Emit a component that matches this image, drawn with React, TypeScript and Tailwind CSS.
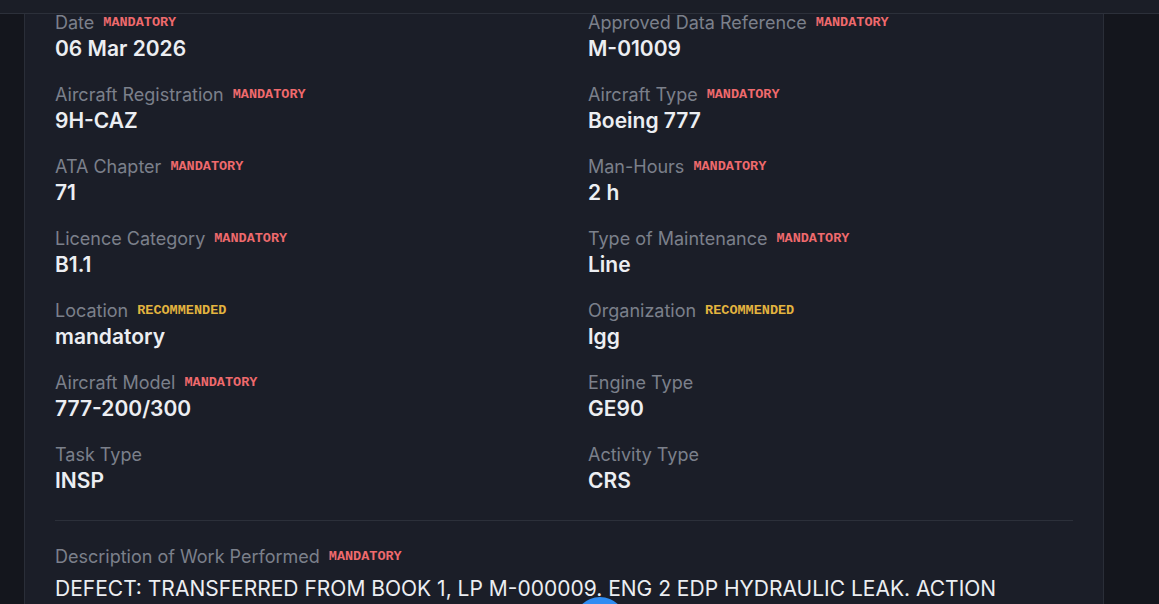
import React from "react";

type Field = { label: string; value: string; badge?: "M" | "R" };

const fields: Field[] = [
  { label: "Date", value: "06 Mar 2026", badge: "M" },
  { label: "Approved Data Reference", value: "M-01009", badge: "M" },
  { label: "Aircraft Registration", value: "9H-CAZ", badge: "M" },
  { label: "Aircraft Type", value: "Boeing 777", badge: "M" },
  { label: "ATA Chapter", value: "71", badge: "M" },
  { label: "Man-Hours", value: "2 h", badge: "M" },
  { label: "Licence Category", value: "B1.1", badge: "M" },
  { label: "Type of Maintenance", value: "Line", badge: "M" },
  { label: "Location", value: "mandatory", badge: "R" },
  { label: "Organization", value: "lgg", badge: "R" },
  { label: "Aircraft Model", value: "777-200/300", badge: "M" },
  { label: "Engine Type", value: "GE90" },
  { label: "Task Type", value: "INSP" },
  { label: "Activity Type", value: "CRS" },
];

function Badge({ kind }: { kind: "M" | "R" }) {
  return (
    <span
      className={
        "font-['Liberation_Mono',monospace] font-bold text-[13.5px] leading-none " +
        (kind === "M" ? "text-[#ef6a6d]" : "text-[#e3b43f]")
      }
    >
      {kind === "M" ? "MANDATORY" : "RECOMMENDED"}
    </span>
  );
}

function Label({ text, badge }: { text: string; badge?: "M" | "R" }) {
  return (
    <div className="flex items-center gap-[9px] h-[20px]">
      <span className="text-[18px] leading-[20px] text-[#7b808b]">{text}</span>
      {badge && <Badge kind={badge} />}
    </div>
  );
}

export default function App() {
  return (
    <div className="h-[604px] w-[1159px] overflow-hidden relative bg-[#14161d] font-['Inter',sans-serif] flex flex-col">
      <div className="h-[14px] shrink-0 bg-[#1b1e27] border-b border-[#2c303a]" />
      <div className="flex flex-1 min-h-0">
        <div className="w-[24px] shrink-0 bg-[#14161d]" />
        <div className="w-[1080px] shrink-0 bg-[#1b1e28] border-l border-r border-[#2a2e38] px-[30px]">
          <div className="mt-[-1px] grid grid-cols-2 gap-x-[48px] gap-y-[22px]">
            {fields.map((f) => (
              <div key={f.label} className="flex flex-col">
                <Label text={f.label} badge={f.badge} />
                <div className="mt-[2px] text-[21px] leading-[28px] font-semibold text-[#eceef2]">{f.value}</div>
              </div>
            ))}
          </div>
          <div className="mt-[25px] border-t border-[#2c303a]" />
          <div className="mt-[26px]">
            <Label text="Description of Work Performed" badge="M" />
            <div className="mt-[8px] text-[21px] leading-[28px] text-[#eceef2] whitespace-nowrap">
              DEFECT: TRANSFERRED FROM BOOK 1, LP M-000009. ENG 2 EDP HYDRAULIC LEAK. ACTION
            </div>
          </div>
        </div>
        <div className="flex-1 bg-[#14161d]" />
      </div>
      <div className="absolute left-[574px] top-[597px] w-[52px] h-[52px] rounded-full bg-[#2f8cf2]" />
    </div>
  );
}
